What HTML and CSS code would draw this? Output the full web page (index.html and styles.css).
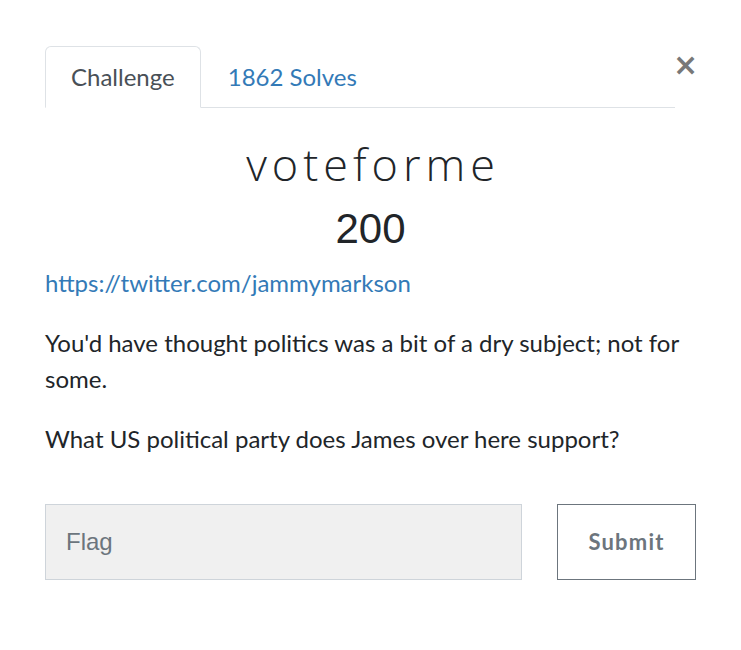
FILE: index.html
```html
<!DOCTYPE html>
<html>
<head>
<meta charset="utf-8">
<link rel="stylesheet" href="styles.css">
</head>
<body>
<div class="modal">
  <div class="header">
    <ul class="tabs">
      <li class="tab active">Challenge</li>
      <li class="tab link">1862 Solves</li>
    </ul>
    <span class="close">&times;</span>
  </div>
  <h2 class="title">voteforme</h2>
  <h3 class="value">200</h3>
  <p class="url"><a href="#">https://twitter.com/jammymarkson</a></p>
  <p class="desc">You'd have thought politics was a bit of a dry subject; not for some.</p>
  <p class="desc">What US political party does James over here support?</p>
  <div class="form">
    <div class="input">Flag</div>
    <div class="button">Submit</div>
  </div>
</div>
</body>
</html>
```
FILE: styles.css
```css
html, body { margin: 0; padding: 0; background: #fff; }
body { font-family: Lato, "Open Sans", sans-serif; color: #212529; font-size: 24px; line-height: 36px; }
.modal { padding: 46px 45px 0 45px; width: 651px; }
.header { display: flex; align-items: flex-start; }
.tabs { list-style: none; margin: 0; padding: 0; display: flex; width: 630px; flex: none; border-bottom: 1px solid #dee2e6; }
.tab { font-size: 24px; height: 60px; line-height: 60px; padding: 0 25px; border: 1px solid transparent; border-radius: 6px 6px 0 0; margin-bottom: -1px; }
.tab.active { color: #495057; border-color: #dee2e6 #dee2e6 #fff; background: #fff; }
.tab.link { color: #337ab7; padding-left: 26px; }
.close { font-family: "DejaVu Sans", sans-serif; font-size: 30px; color: #787878; font-weight: bold; line-height: 40px; margin-left: -2px; margin-top: -1px; }
.title { font-family: "Open Sans", sans-serif; font-weight: 300; font-size: 45px; letter-spacing: 5px; padding-left: 5px; text-align: center; margin: 26px 0 0; line-height: 60px; }
.value { font-family: "Liberation Sans", Arial, sans-serif; font-weight: normal; font-size: 42px; text-align: center; margin: 9px 0 0; line-height: 52px; }
.url { margin: 10px 0 24px; }
.url a { color: #337ab7; text-decoration: none; }
.desc { margin: 0 0 24px; }
.form { display: flex; justify-content: space-between; margin-top: 47px; }
.input { width: 477px; height: 76px; box-sizing: border-box; background: #f0f0f0; border: 1px solid #ced4da; font-family: "Liberation Sans", Arial, sans-serif; font-size: 24px; color: #6c757d; padding-left: 20px; display: flex; align-items: center; }
.button { width: 139px; height: 76px; box-sizing: border-box; border: 1px solid #6c757d; color: #6c757d; font-weight: bold; font-size: 22px; letter-spacing: 1.2px; display: flex; align-items: center; justify-content: center; }
```
